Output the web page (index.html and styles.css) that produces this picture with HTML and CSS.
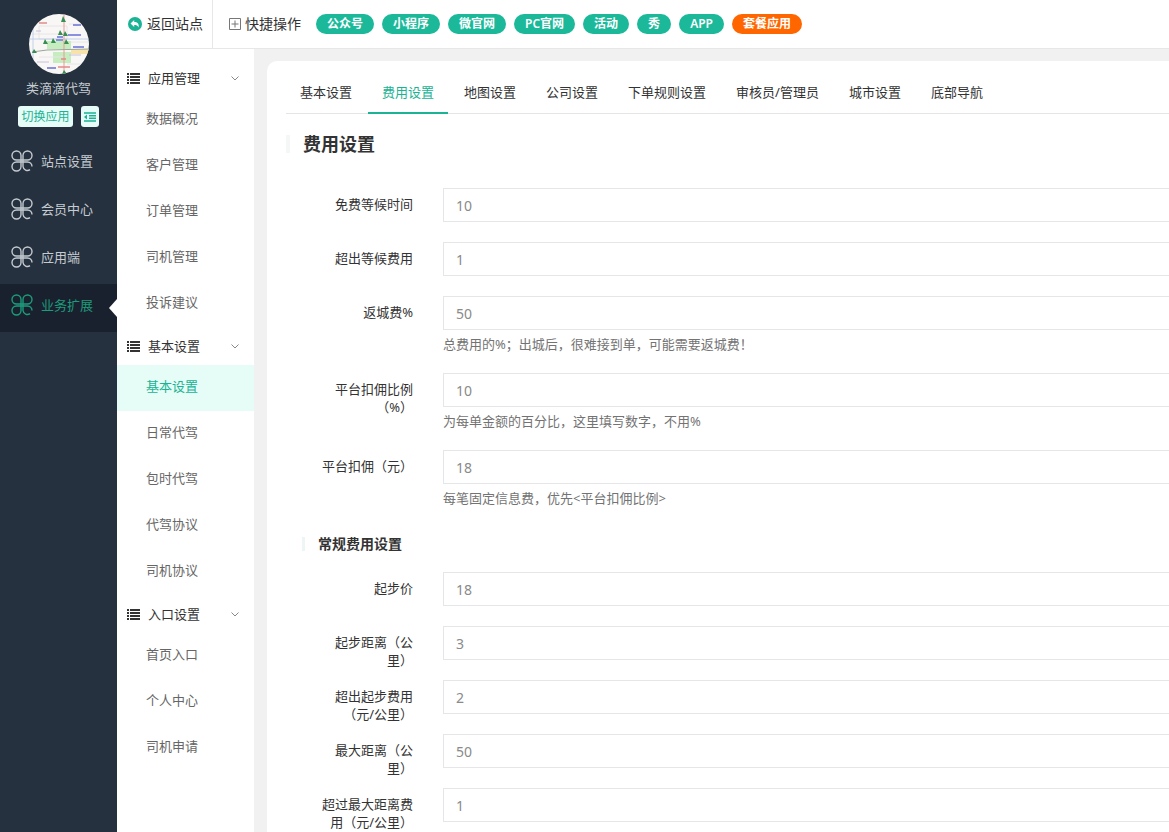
FILE: index.html
```
<!DOCTYPE html>
<html lang="zh-CN">
<head>
<meta charset="utf-8">
<meta name="viewport" content="width=device-width, initial-scale=1">
<title>费用设置</title>
<link rel="stylesheet" href="styles.css">
</head>
<body>
<svg class="defs" aria-hidden="true">
  <symbol id="clover" viewBox="0 0 22 22">
    <path d="M10 10V5.500A4.500 4.500 0 1 0 5.500 10H16.500A4.500 4.500 0 1 0 12 5.500V16.500A4.500 4.500 0 0 0 19 19.700M12 12H16.500A4.500 4.500 0 0 1 21 16.500M10 10V16.500A4.500 4.500 0 1 1 5.500 12H16.500" fill="none" stroke="currentColor" stroke-width="1.400"/>
  </symbol>
  <symbol id="list" viewBox="0 0 13 11">
    <path d="M0 1h2M3 1h10M0 4h2M3 4h10M0 7h2M3 7h10M0 10h2M3 10h10" fill="none" stroke="currentColor" stroke-width="1.800"/>
  </symbol>
  <symbol id="chevron" viewBox="0 0 8 5">
    <path d="M.5.5 4 4 7.500.5" fill="none" stroke="currentColor"/>
  </symbol>
</svg>
<div class="app">
  <aside class="sidebar">
    <div class="profile">
      <svg class="avatar" viewBox="0 0 60 60" role="img" aria-label="类滴滴代驾">
        <defs><clipPath id="round"><circle cx="30" cy="30" r="30"/></clipPath></defs>
        <g clip-path="url(#round)">
          <rect width="60" height="60" fill="#f8f7f6"/>
          <path d="M18 27h24v8H18zM24 38h18v11H24z" fill="#c5edc0"/>
          <path d="M42 35h18v5H42z" fill="#f7e3a9"/>
          <path d="M10 12h28v13H10zM40 10h16M3 20h36M42 28h18M10 43h25M38 50h17" fill="none" stroke="#e8e4e6"/>
          <path d="M4 0v60M0 25h60" stroke="#b7c6eb" stroke-width=".8"/>
          <path d="M35 0v60" stroke="#ed9a91"/>
          <path d="M3 38 18 36 60 35" fill="none" stroke="#9aa49a"/>
          <path d="M34 2l3 6h-5zM31 16l3 5h-5zM36 17l3 5h-5zM16 25l3 5h-5zM24 24l3 5h-5zM37 25l3 5h-5zM5 35l3 4h-5zM35 56l3 4h-5z" fill="#388f53"/>
          <path d="M28 23h6M27 26h7M39 21h13M44 11h8M44 33h11M18 54h9" stroke="#8c91df" stroke-width="2"/>
          <path d="M10 9h8M32 45h5M29 53h12" stroke="#e18b88" stroke-width="1.500"/>
          <path d="M7 17h5M40 41h12M8 48h12" stroke="#c8c0da"/>
        </g>
      </svg>
      <div class="name">类滴滴代驾</div>
      <div class="profile-actions">
        <button class="mini" type="button">切换应用</button>
        <button class="mini mini-icon" type="button" aria-label="收起菜单">
          <svg viewBox="0 0 12 10" width="12" height="10"><path d="M0 1h12M5 3.700h7M5 6.300h7M0 9h12" stroke="currentColor" stroke-width="1.500"/><path d="M3 2.500v5L0 5z" fill="currentColor"/></svg>
        </button>
      </div>
    </div>
    <nav class="main-nav">
      <a href="#"><svg><use href="#clover"/></svg>站点设置</a>
      <a href="#"><svg><use href="#clover"/></svg>会员中心</a>
      <a href="#"><svg><use href="#clover"/></svg>应用端</a>
      <a href="#" class="active"><svg><use href="#clover"/></svg>业务扩展</a>
    </nav>
  </aside>
  <div class="workspace">
    <header class="topbar">
      <a class="back" href="#">
        <svg viewBox="0 0 14 14" width="14" height="14"><circle cx="7" cy="7" r="7" fill="#1ab394"/><path d="M6.200 3v2.100C9.500 5.100 11.200 6.700 10.600 10.400 9.700 8.600 8.500 8 6.200 8v2L2.500 6.500z" fill="#fff"/></svg>返回站点</a>
      <div class="quick">
        <svg viewBox="0 0 12 12" width="12" height="12"><path d="M.5.5h11v11H.5zM6 2.500v7M2.500 6h7" fill="none" stroke="#777"/></svg>快捷操作</div>
      <nav class="pills">
        <a href="#">公众号</a><a href="#">小程序</a><a href="#">微官网</a><a href="#">PC官网</a><a href="#">活动</a><a href="#">秀</a><a href="#">APP</a><a href="#" class="hot">套餐应用</a>
      </nav>
    </header>
    <div class="body">
      <nav class="menu">
        <button type="button"><svg class="list"><use href="#list"/></svg>应用管理<svg class="chevron"><use href="#chevron"/></svg></button>
        <a href="#">数据概况</a>
        <a href="#">客户管理</a>
        <a href="#">订单管理</a>
        <a href="#">司机管理</a>
        <a href="#">投诉建议</a>
        <button type="button"><svg class="list"><use href="#list"/></svg>基本设置<svg class="chevron"><use href="#chevron"/></svg></button>
        <a href="#" class="active">基本设置</a>
        <a href="#">日常代驾</a>
        <a href="#">包时代驾</a>
        <a href="#">代驾协议</a>
        <a href="#">司机协议</a>
        <button type="button"><svg class="list"><use href="#list"/></svg>入口设置<svg class="chevron"><use href="#chevron"/></svg></button>
        <a href="#">首页入口</a>
        <a href="#">个人中心</a>
        <a href="#">司机申请</a>
      </nav>
      <main class="content">
        <div class="card">
          <nav class="tabs">
            <a href="#">基本设置</a>
            <a href="#" class="active">费用设置</a>
            <a href="#">地图设置</a>
            <a href="#">公司设置</a>
            <a href="#">下单规则设置</a>
            <a href="#">审核员/管理员</a>
            <a href="#">城市设置</a>
            <a href="#">底部导航</a>
          </nav>
          <h1>费用设置</h1>
          <form>
            <div class="row"><label for="wait">免费等候时间</label><div class="control"><input id="wait" type="text" value="10"></div></div>
            <div class="row"><label for="wait-fee">超出等候费用</label><div class="control"><input id="wait-fee" type="text" value="1"></div></div>
            <div class="row"><label for="return">返城费%</label><div class="control"><input id="return" type="text" value="50"><p>总费用的%；出城后，很难接到单，可能需要返城费！</p></div></div>
            <div class="row"><label for="rate">平台扣佣比例（%）</label><div class="control"><input id="rate" type="text" value="10"><p>为每单金额的百分比，这里填写数字，不用%</p></div></div>
            <div class="row"><label for="fixed">平台扣佣（元）</label><div class="control"><input id="fixed" type="text" value="18"><p>每笔固定信息费，优先&lt;平台扣佣比例&gt;</p></div></div>
            <h2>常规费用设置</h2>
            <div class="row"><label for="base">起步价</label><div class="control"><input id="base" type="text" value="18"></div></div>
            <div class="row"><label for="base-km">起步距离（公里）</label><div class="control"><input id="base-km" type="text" value="3"></div></div>
            <div class="row"><label for="over-fee">超出起步费用（元/公里）</label><div class="control"><input id="over-fee" type="text" value="2"></div></div>
            <div class="row"><label for="max-km">最大距离（公里）</label><div class="control"><input id="max-km" type="text" value="50"></div></div>
            <div class="row"><label for="max-fee">超过最大距离费用（元/公里）</label><div class="control"><input id="max-fee" type="text" value="1"></div></div>
          </form>
        </div>
      </main>
    </div>
  </div>
</div>
</body>
</html>
```
FILE: styles.css
```
* { box-sizing: border-box; }

body {
  margin: 0;
  font: 13px/18px "Noto Sans", "Noto Sans CJK SC", sans-serif;
  color: #333;
}

a { color: inherit; text-decoration: none; }
button, input { font: inherit; }
.defs { display: none; }

.app { display: flex; height: 100vh; overflow: hidden; }

/* Dark sidebar */
.sidebar { flex: 0 0 117px; background: #25313e; color: #c5cbd1; }
.profile {
  display: flex;
  flex-direction: column;
  align-items: center;
  padding: 14px 0 13px;
}
.avatar { width: 60px; height: 60px; }
.name { margin: 5px 0 9px; }
.profile-actions { display: flex; gap: 8px; }
.mini {
  height: 21px;
  padding: 0 3px;
  border: 0;
  border-radius: 3px;
  background: #e6fcf7;
  color: #1ab394;
  font-size: 12px;
  line-height: 21px;
}
.mini-icon { display: flex; align-items: center; }
.main-nav a {
  position: relative;
  display: flex;
  align-items: center;
  gap: 8px;
  height: 48px;
  padding: 0 0 6px 11px;
}
.main-nav svg { width: 22px; height: 22px; }
.main-nav .active { background: #1a212e; color: #1c9c7c; }
.main-nav .active::after {
  content: "";
  position: absolute;
  top: 15px;
  right: 0;
  border: 9px solid transparent;
  border-left: 0;
  border-right: 8px solid #fff;
}

/* Top bar */
.workspace { flex: 1; display: flex; flex-direction: column; min-width: 0; }
.topbar {
  display: flex;
  flex: 0 0 49px;
  align-items: center;
  border-bottom: 1px solid #e7e7e7;
  font-size: 14px;
}
.back {
  display: flex;
  align-items: center;
  gap: 5px;
  height: 48px;
  padding: 0 9px 0 11px;
  border-right: 1px solid #e7e7e7;
}
.quick { display: flex; align-items: center; gap: 4px; padding: 0 15px 0 16px; }
.pills { display: flex; gap: 8px; }
.pills a {
  padding: 0 11px;
  border-radius: 10px;
  background: #1bb99a;
  color: #fff;
  font-size: 12px;
  font-weight: 600;
  line-height: 20px;
}
.pills .hot { background: #ff6600; }

/* Secondary menu */
.body { display: flex; flex: 1; min-height: 0; }
.menu { flex: 0 0 137px; padding-top: 10px; overflow: hidden; }
.menu button {
  display: flex;
  align-items: center;
  width: 100%;
  height: 38px;
  padding: 0 15px 0 10px;
  border: 0;
  background: none;
  color: #333;
}
.list { width: 13px; height: 11px; margin-right: 8px; }
.chevron { width: 8px; height: 5px; margin-left: auto; color: #888; }
.menu a { display: block; padding: 10px 0 14px 29px; line-height: 22px; color: #666; }
.menu .active { background: #e6fcf7; color: #1ab394; }

/* Settings page */
.content {
  display: flex;
  flex: 1;
  min-width: 0;
  padding: 12px 0 0 13px;
  background: #f1f1f1;
  overflow: hidden;
}
.card {
  flex: 1;
  min-width: 0;
  padding: 12px 0 0 19px;
  border-radius: 10px 0 0 0;
  background: #fff;
}
.tabs { display: flex; gap: 2px; box-shadow: inset 0 -1px #e3e6e6; }
.tabs a {
  padding: 0 14px;
  border-bottom: 2px solid transparent;
  line-height: 39px;
  white-space: nowrap;
}
.tabs .active { border-color: #1ab394; color: #1ab394; }

h1, h2 { display: flex; align-items: center; gap: 13px; font-weight: 700; }
h1 { margin: 18px 0 32px; font-size: 18px; line-height: 24px; }
h2 { margin: 7px 0 18px 16px; font-size: 14px; line-height: 20px; }
h1::before, h2::before { content: ""; width: 4px; height: 18px; background: #f5f7f7; }
h2::before { width: 3px; height: 14px; background: #eef6f5; }

.row { display: flex; gap: 30px; }
.row label { flex: 0 0 127px; padding: 7px 0 0 30px; text-align: right; }
.control { flex: 1; min-width: 0; padding-bottom: 20px; }
.control input {
  display: block;
  width: 100%;
  height: 34px;
  padding: 0 12px;
  border: 1px solid #e5e6e7;
  border-right: 0;
  border-radius: 0;
  background: #fff;
  color: #8a8a8a;
  font-size: 14px;
}
.control p { margin: 5px 0 0; color: #737373; }
```
